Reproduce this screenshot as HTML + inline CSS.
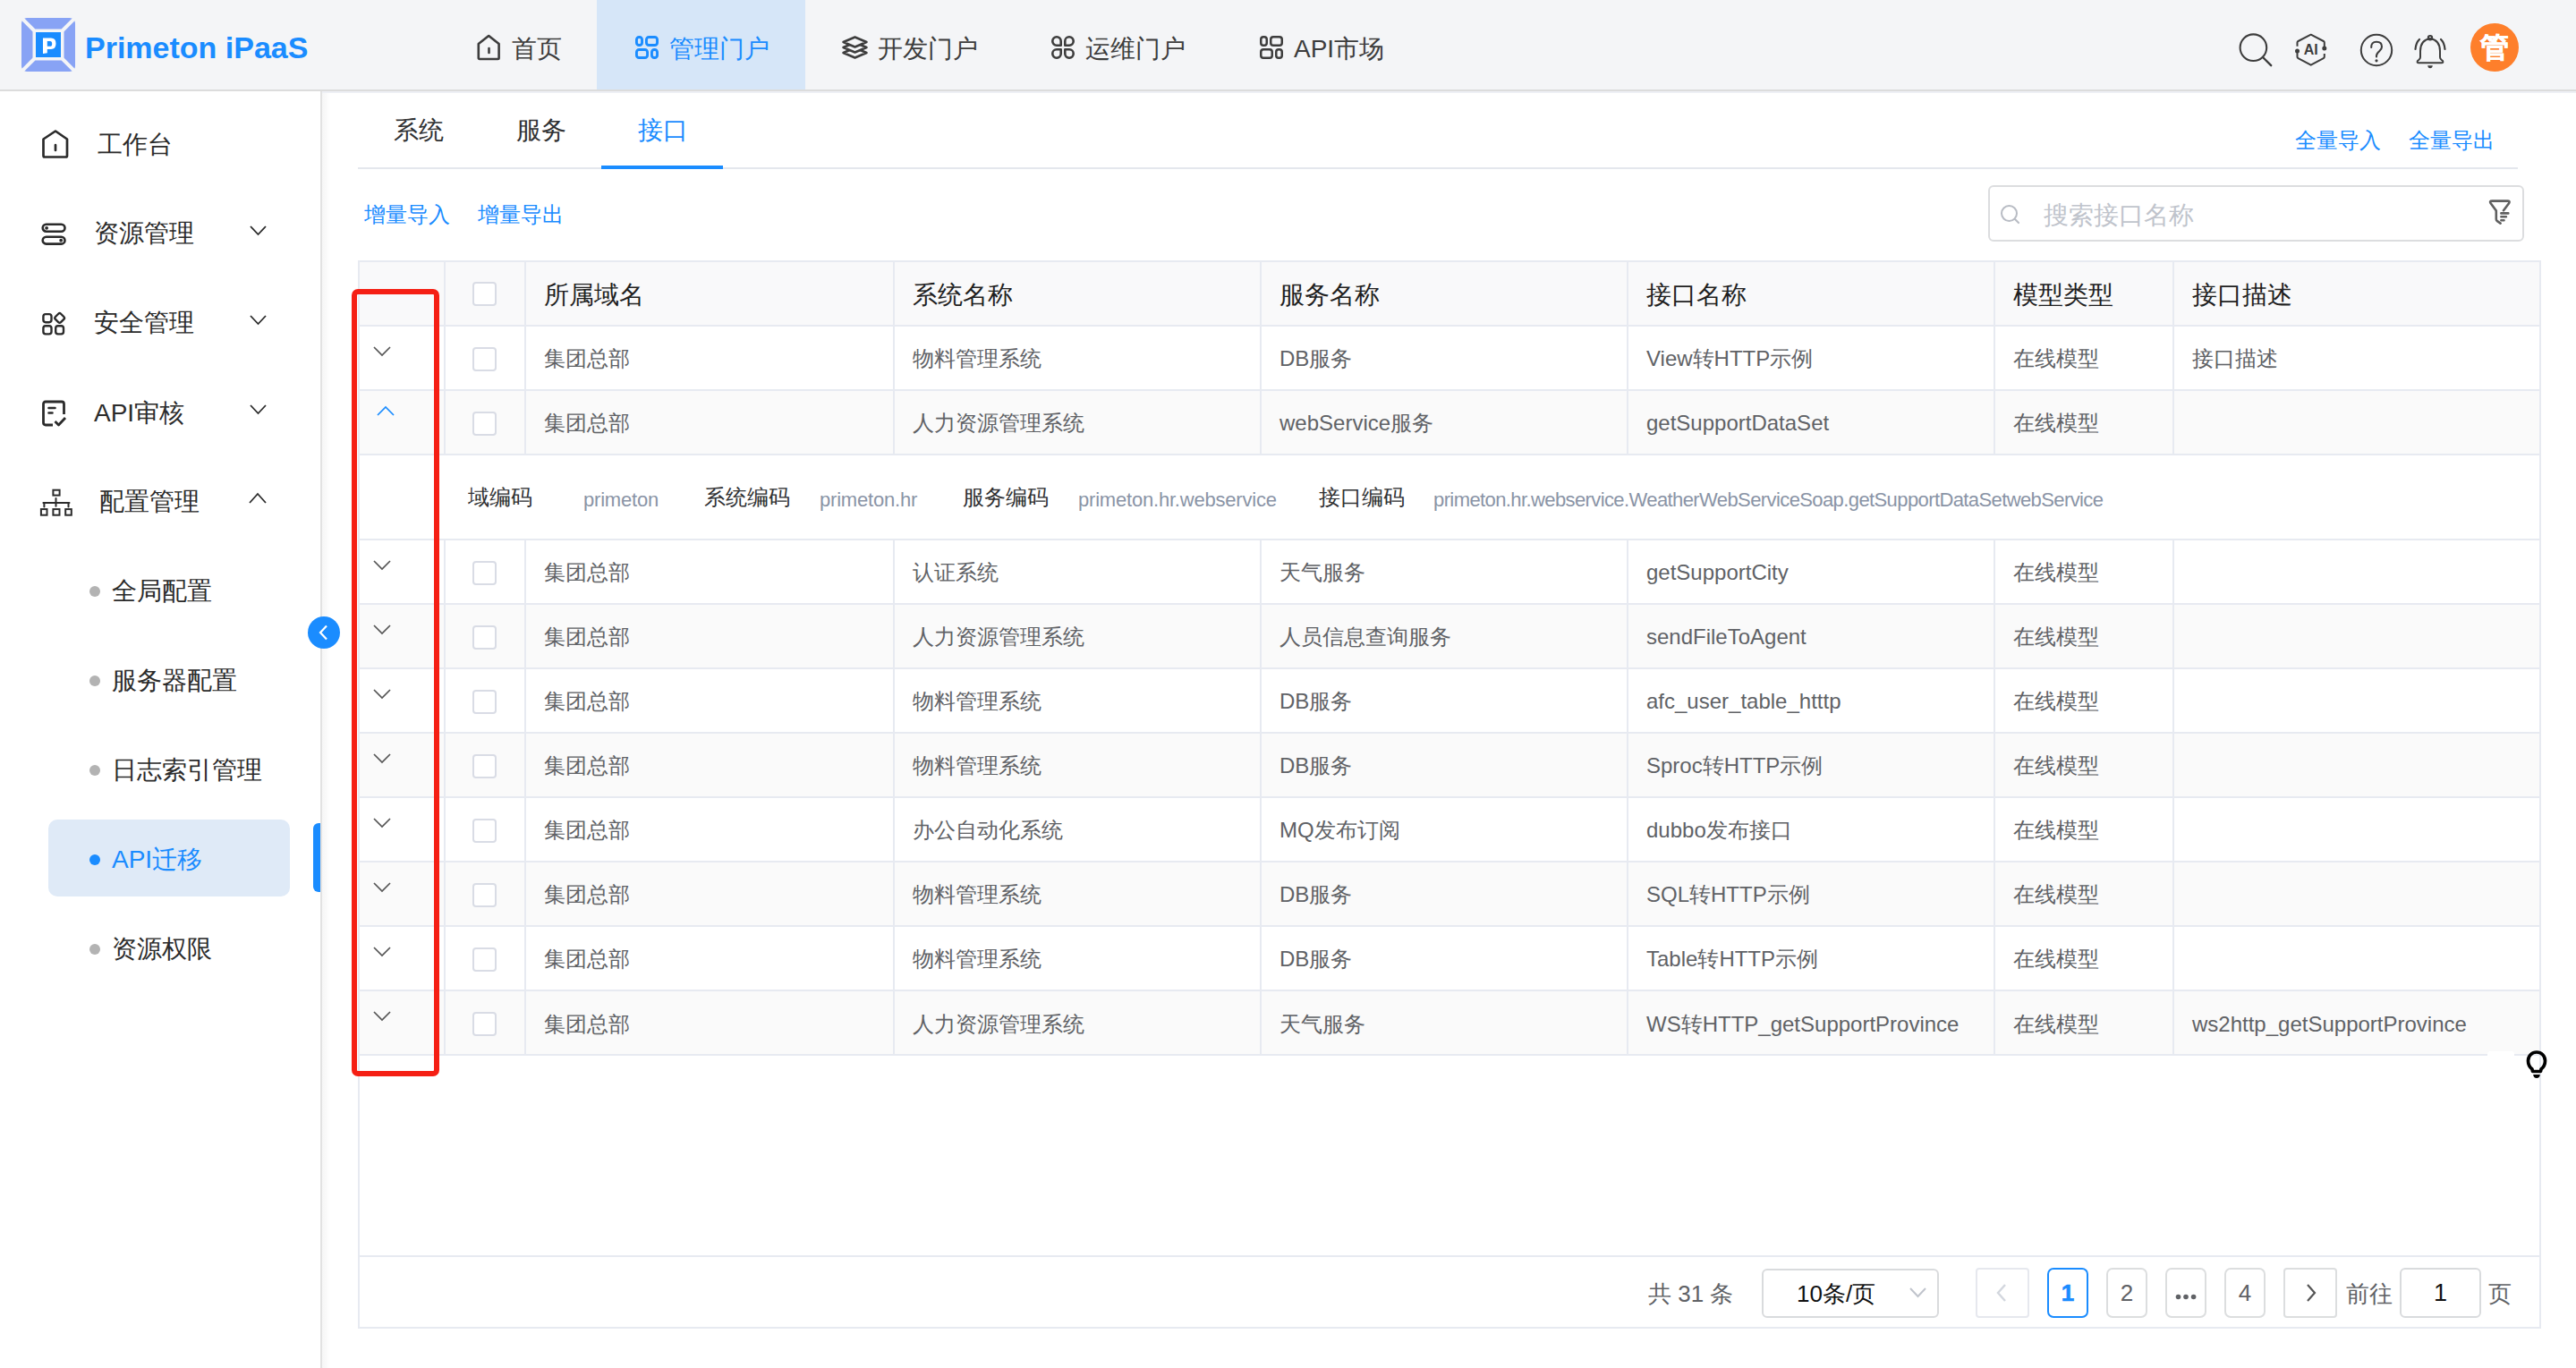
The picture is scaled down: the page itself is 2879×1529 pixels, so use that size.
<!DOCTYPE html><html><head><meta charset="utf-8"><style>
html,body{margin:0;padding:0;}
body{width:2879px;height:1529px;overflow:hidden;position:relative;background:#fff;font-family:"Liberation Sans", sans-serif;}
.t{position:absolute;white-space:nowrap;}
.b{position:absolute;}
</style></head><body>
<div class="b" style="left:0px;top:0px;width:2879px;height:100px;background:#f4f5f7"></div>
<div class="b" style="left:0px;top:100px;width:2879px;height:2px;background:#dcdcdc"></div>
<svg class="b" style="left:24px;top:20px" width="60" height="60" viewBox="0 0 60 60">
<rect x="0" y="0" width="60" height="60" rx="6" fill="#88a3f5"/>
<path d="M0 0L14 14M60 0L46 14M0 60L14 46M60 60L46 46" stroke="#f4f5f7" stroke-width="4"/>
<rect x="12.5" y="12.5" width="35" height="35" fill="#f4f5f7"/>
<rect x="16" y="16" width="28" height="28" fill="#1a8cff"/>
<path fill="#fff" fill-rule="evenodd" d="M24 22.5H33Q38.5 22.5 38.5 28.8Q38.5 35 33 35H28.8V39.3L24 40ZM28.8 26V31.8H32Q34.2 31.8 34.2 28.9Q34.2 26 32 26Z"/>
</svg>
<div class="t" style="left:95px;top:32.5px;font-size:34px;line-height:40px;color:#1a8cff;font-weight:bold;">Primeton iPaaS</div>
<div class="b" style="left:667px;top:0px;width:233px;height:100px;background:#d6e6f8"></div>
<svg class="b" style="left:533px;top:38px" width="27" height="30" viewBox="0 0 27 30"><path d="M1.8 11 L13.2 2 L24.6 11 V26.8 Q24.6 28 23.4 28 H3 Q1.8 28 1.8 26.8 Z" fill="none" stroke="#3d3d3d" stroke-width="2.6" stroke-linejoin="round"/>
<path d="M13.5 16V21" stroke="#3d3d3d" stroke-width="2.6" stroke-linecap="round"/></svg>
<div class="t" style="left:572px;top:34.5px;font-size:28px;line-height:40px;color:#3d3d3d;font-weight:normal;">首页</div>
<svg class="b" style="left:710px;top:40px" width="26" height="26" viewBox="0 0 26 26"><rect x="1.45" y="1.45" width="6.1" height="9.1" rx="2.8" fill="none" stroke="#1a8cff" stroke-width="2.9"/><rect x="12.45" y="1.45" width="12.1" height="9.1" rx="2.8" fill="none" stroke="#1a8cff" stroke-width="2.9"/><rect x="1.45" y="15.45" width="12.1" height="9.1" rx="2.8" fill="none" stroke="#1a8cff" stroke-width="2.9"/><rect x="18.45" y="15.45" width="6.1" height="9.1" rx="2.8" fill="none" stroke="#1a8cff" stroke-width="2.9"/></svg>
<div class="t" style="left:748px;top:34.5px;font-size:28px;line-height:40px;color:#1a8cff;font-weight:normal;">管理门户</div>
<svg class="b" style="left:940px;top:39px" width="31" height="29" viewBox="0 0 31 29"><g stroke="#3d3d3d" stroke-width="2.5" stroke-linejoin="round" fill="#f4f5f7">
<path d="M15.5 14.5 L28.5 20 L15.5 25.5 L2.5 20 Z"/>
<path d="M15.5 8.5 L28.5 14 L15.5 19.5 L2.5 14 Z"/>
<path d="M15.5 2.5 L28.5 8 L15.5 13.5 L2.5 8 Z"/></g></svg>
<div class="t" style="left:981px;top:34.5px;font-size:28px;line-height:40px;color:#3d3d3d;font-weight:normal;">开发门户</div>
<svg class="b" style="left:1174px;top:39px" width="28" height="28" viewBox="0 0 28 28"><path d="M6.8999999999999995 2.3 H7.1 A4.6 4.6 0 0 1 11.7 6.8999999999999995 V11.7 H6.8999999999999995 A4.6 4.6 0 0 1 2.3 7.1 V6.8999999999999995 A4.6 4.6 0 0 1 6.8999999999999995 2.3 Z" fill="none" stroke="#3d3d3d" stroke-width="2.6" stroke-linejoin="round"/><path d="M20.9 2.3 H21.1 A4.6 4.6 0 0 1 25.7 6.8999999999999995 V7.1 A4.6 4.6 0 0 1 21.1 11.7 H16.3 V6.8999999999999995 A4.6 4.6 0 0 1 20.9 2.3 Z" fill="none" stroke="#3d3d3d" stroke-width="2.6" stroke-linejoin="round"/><path d="M6.8999999999999995 16.3 H11.7 V21.1 A4.6 4.6 0 0 1 7.1 25.7 H6.8999999999999995 A4.6 4.6 0 0 1 2.3 21.1 V20.9 A4.6 4.6 0 0 1 6.8999999999999995 16.3 Z" fill="none" stroke="#3d3d3d" stroke-width="2.6" stroke-linejoin="round"/><path d="M16.3 16.3 H21.1 A4.6 4.6 0 0 1 25.7 20.9 V21.1 A4.6 4.6 0 0 1 21.1 25.7 H20.9 A4.6 4.6 0 0 1 16.3 21.1 V16.3 Z" fill="none" stroke="#3d3d3d" stroke-width="2.6" stroke-linejoin="round"/></svg>
<div class="t" style="left:1213px;top:34.5px;font-size:28px;line-height:40px;color:#3d3d3d;font-weight:normal;">运维门户</div>
<svg class="b" style="left:1408px;top:40px" width="26" height="26" viewBox="0 0 26 26"><rect x="1.25" y="1.25" width="6.5" height="9.5" rx="2.8" fill="none" stroke="#3d3d3d" stroke-width="2.5"/><rect x="12.25" y="1.25" width="12.5" height="9.5" rx="2.8" fill="none" stroke="#3d3d3d" stroke-width="2.5"/><rect x="1.25" y="15.25" width="12.5" height="9.5" rx="2.8" fill="none" stroke="#3d3d3d" stroke-width="2.5"/><rect x="18.25" y="15.25" width="6.5" height="9.5" rx="2.8" fill="none" stroke="#3d3d3d" stroke-width="2.5"/></svg>
<div class="t" style="left:1446px;top:34.5px;font-size:28px;line-height:40px;color:#3d3d3d;font-weight:normal;">API市场</div>
<svg class="b" style="left:2500px;top:35px" width="42" height="42" viewBox="0 0 42 42"><circle cx="18.4" cy="18.2" r="14.8" fill="none" stroke="#3d3d3d" stroke-width="2.1"/>
<path d="M29 29 L38.2 38.2" stroke="#3d3d3d" stroke-width="2.4" stroke-linecap="round"/></svg>
<svg class="b" style="left:2563px;top:36px" width="40" height="40" viewBox="0 0 40 40"><path d="M4.5 15.8 V11.5 Q4.5 10.5 5.5 10 L19.7 2.7 L33.8 10 Q34.8 10.5 34.8 11.5 V18.1" fill="none" stroke="#3d3d3d" stroke-width="2" stroke-linejoin="round"/>
<path d="M34.8 24 V27.6 Q34.8 28.6 33.8 29.1 L19.7 36.7 L5.5 29.1 Q4.5 28.6 4.5 27.6 V20.9" fill="none" stroke="#3d3d3d" stroke-width="2" stroke-linejoin="round"/>
<circle cx="4.5" cy="20.9" r="2.5" fill="#3d3d3d"/><circle cx="34.8" cy="18.1" r="2.5" fill="#3d3d3d"/>
<text x="19.7" y="25" text-anchor="middle" font-family="Liberation Sans" font-weight="bold" font-size="16" fill="#3d3d3d">AI</text></svg>
<svg class="b" style="left:2636px;top:36px" width="40" height="40" viewBox="0 0 40 40"><circle cx="20" cy="20" r="17.2" fill="none" stroke="#3d3d3d" stroke-width="2"/>
<path d="M14.2 17 Q14 10.8 20 10.8 Q26 10.8 26 16.2 Q26 18.8 23.2 21.2 Q20 24 20 26.2 V27.5" fill="none" stroke="#3d3d3d" stroke-width="2.1" stroke-linecap="round"/>
<circle cx="20" cy="31.8" r="1.6" fill="#3d3d3d"/></svg>
<svg class="b" style="left:2697px;top:37px" width="38" height="42" viewBox="0 0 38 42"><path d="M19 6 Q8 8 8 20 V27 Q8 28.5 6.5 29.8 L5 31 Q3.8 33.3 6.3 33.3 H31.7 Q34.2 33.3 33 31 L31.5 29.8 Q30 28.5 30 27 V20 Q30 8 19 6 Z" fill="none" stroke="#3d3d3d" stroke-width="2" stroke-linejoin="round"/>
<circle cx="19" cy="5.2" r="2.2" fill="none" stroke="#3d3d3d" stroke-width="2"/>
<path d="M16.2 36.3 H21.8 Q21.5 39.3 19 39.3 Q16.5 39.3 16.2 36.3Z" fill="#3d3d3d"/>
<path d="M7 7 Q3 11 2.5 18" fill="none" stroke="#3d3d3d" stroke-width="2.2" stroke-linecap="round"/>
<path d="M31 7 Q35 11 35.5 18" fill="none" stroke="#3d3d3d" stroke-width="2.2" stroke-linecap="round"/></svg>
<div class="b" style="left:2761px;top:26px;width:54px;height:54px;background:#fe7f2b;border-radius:50%"></div>
<div class="t" style="left:2772px;top:33.0px;font-size:32px;line-height:40px;color:#fff;font-weight:bold;-webkit-text-stroke:0.6px #fff">管</div>
<div class="b" style="left:358px;top:102px;width:2px;height:1427px;background:#e2e2e2"></div>
<div class="b" style="left:360px;top:102px;width:10px;height:1427px;background:linear-gradient(to right, rgba(0,0,0,0.035), rgba(0,0,0,0))"></div>
<svg class="b" style="left:46px;top:144px" width="32" height="34" viewBox="0 0 32 34"><path d="M2.5 11.5 L16 2.5 L29 11.5 V30 Q29 31.5 27.5 31.5 H4 Q2.5 31.5 2.5 30 Z" fill="none" stroke="#2b2b2b" stroke-width="2.7" stroke-linejoin="round"/>
<path d="M16 18V24" stroke="#2b2b2b" stroke-width="2.7" stroke-linecap="round"/></svg>
<div class="t" style="left:109px;top:141.5px;font-size:28px;line-height:40px;color:#2b2b2b;font-weight:normal;">工作台</div>
<svg class="b" style="left:45px;top:248px" width="31" height="28" viewBox="0 0 31 28"><rect x="2.7" y="2.8" width="24.8" height="7.9" rx="3.95" fill="none" stroke="#2b2b2b" stroke-width="2.6"/>
<rect x="2.7" y="16.7" width="24.8" height="7.9" rx="3.95" fill="none" stroke="#2b2b2b" stroke-width="2.6"/>
<circle cx="7.1" cy="6.8" r="1.9" fill="#2b2b2b"/><circle cx="23.2" cy="20.7" r="1.9" fill="#2b2b2b"/></svg>
<div class="t" style="left:105px;top:241.0px;font-size:28px;line-height:40px;color:#2b2b2b;font-weight:normal;">资源管理</div>
<svg class="b" style="left:277.5px;top:251px" width="21" height="13" viewBox="0 0 21 13"><path d="M2 2 L10.5 11 L19 2" fill="none" stroke="#2b2b2b" stroke-width="1.8"/></svg>
<svg class="b" style="left:45px;top:347px" width="30" height="30" viewBox="0 0 30 30"><g fill="none" stroke="#2b2b2b" stroke-width="2.4">
<rect x="3.4" y="4.1" width="9.1" height="9.1" rx="2.6"/>
<rect x="-4.3" y="-4.3" width="8.6" height="8.6" rx="2" transform="translate(21.65 8.4) rotate(45)"/>
<rect x="3.4" y="17.2" width="9.1" height="9.2" rx="2.6"/>
<rect x="17.2" y="17.2" width="8.8" height="9.2" rx="2.6"/></g></svg>
<div class="t" style="left:105px;top:341.0px;font-size:28px;line-height:40px;color:#2b2b2b;font-weight:normal;">安全管理</div>
<svg class="b" style="left:277.5px;top:351px" width="21" height="13" viewBox="0 0 21 13"><path d="M2 2 L10.5 11 L19 2" fill="none" stroke="#2b2b2b" stroke-width="1.8"/></svg>
<svg class="b" style="left:46px;top:447px" width="30" height="32" viewBox="0 0 30 32"><path d="M13 28 H5 Q2.5 28 2.5 25.5 V4.5 Q2.5 2 5 2 H23 Q25.5 2 25.5 4.5 V16" fill="none" stroke="#2b2b2b" stroke-width="2.8" stroke-linejoin="round"/>
<path d="M8.5 9H15.5M8.5 14.5H12.5" stroke="#2b2b2b" stroke-width="2.6" stroke-linecap="round"/>
<path d="M15.5 24 L19.5 28 L27 20" fill="none" stroke="#2b2b2b" stroke-width="2.8" stroke-linejoin="round"/></svg>
<div class="t" style="left:105px;top:442.0px;font-size:28px;line-height:40px;color:#2b2b2b;font-weight:normal;">API审核</div>
<svg class="b" style="left:277.5px;top:451px" width="21" height="13" viewBox="0 0 21 13"><path d="M2 2 L10.5 11 L19 2" fill="none" stroke="#2b2b2b" stroke-width="1.8"/></svg>
<svg class="b" style="left:44px;top:546px" width="38" height="32" viewBox="0 0 38 32"><g fill="none" stroke="#2b2b2b" stroke-width="2">
<rect x="15.4" y="1.7" width="7.2" height="5.9"/>
<path d="M18.5 11 V19.8 M4.4 15.9 H33.5 M5.4 15.9 V20.6 M32.5 15.9 V20.6" stroke-linecap="round"/>
<rect x="1.9" y="23.1" width="6.6" height="6.6"/><rect x="15.4" y="23.1" width="7.1" height="6.6"/><rect x="29.2" y="23.1" width="6.6" height="6.6"/></g></svg>
<div class="t" style="left:111px;top:541.0px;font-size:28px;line-height:40px;color:#2b2b2b;font-weight:normal;">配置管理</div>
<svg class="b" style="left:277px;top:549.5px" width="22" height="14" viewBox="0 0 22 14"><path d="M2 12 L11.0 2 L20 12" fill="none" stroke="#2b2b2b" stroke-width="1.8"/></svg>
<div class="b" style="left:100px;top:655px;width:12px;height:12px;background:#b3b3b3;border-radius:50%"></div>
<div class="t" style="left:125px;top:641.0px;font-size:28px;line-height:40px;color:#2b2b2b;font-weight:normal;">全局配置</div>
<div class="b" style="left:100px;top:755px;width:12px;height:12px;background:#b3b3b3;border-radius:50%"></div>
<div class="t" style="left:125px;top:741.0px;font-size:28px;line-height:40px;color:#2b2b2b;font-weight:normal;">服务器配置</div>
<div class="b" style="left:100px;top:855px;width:12px;height:12px;background:#b3b3b3;border-radius:50%"></div>
<div class="t" style="left:125px;top:841.0px;font-size:28px;line-height:40px;color:#2b2b2b;font-weight:normal;">日志索引管理</div>
<div class="b" style="left:100px;top:1055px;width:12px;height:12px;background:#b3b3b3;border-radius:50%"></div>
<div class="t" style="left:125px;top:1041.0px;font-size:28px;line-height:40px;color:#2b2b2b;font-weight:normal;">资源权限</div>
<div class="b" style="left:54px;top:916px;width:270px;height:86px;background:#dfeaf7;border-radius:10px"></div>
<div class="b" style="left:100px;top:955px;width:12px;height:12px;background:#1a8cff;border-radius:50%"></div>
<div class="t" style="left:125px;top:941.0px;font-size:28px;line-height:40px;color:#1a8cff;font-weight:normal;">API迁移</div>
<div class="b" style="left:350px;top:920px;width:8px;height:77px;background:#1a8cff;border-radius:6px 0 0 6px"></div>
<div class="b" style="left:344px;top:689px;width:36px;height:36px;background:#1a8cff;border-radius:50%"></div>
<svg class="b" style="left:344px;top:689px" width="36" height="36" viewBox="0 0 36 36"><path d="M21 10.5 L14 18 L21 25.5" fill="none" stroke="#fff" stroke-width="2.2"/></svg>
<div class="b" style="left:360px;top:102px;width:2519px;height:2px;background:#eef0f5"></div>
<div class="t" style="left:440px;top:125.5px;font-size:28px;line-height:40px;color:#303133;font-weight:normal;">系统</div>
<div class="t" style="left:577px;top:125.5px;font-size:28px;line-height:40px;color:#303133;font-weight:normal;">服务</div>
<div class="t" style="left:713px;top:125.5px;font-size:28px;line-height:40px;color:#1a8cff;font-weight:normal;">接口</div>
<div class="b" style="left:400px;top:187px;width:2414px;height:2px;background:#e4e7ed"></div>
<div class="b" style="left:672px;top:185px;width:136px;height:4px;background:#1a8cff"></div>
<div class="t" style="left:2565px;top:140.0px;font-size:24px;line-height:34px;color:#1a8cff;font-weight:normal;">全量导入</div>
<div class="t" style="left:2692px;top:140.0px;font-size:24px;line-height:34px;color:#1a8cff;font-weight:normal;">全量导出</div>
<div class="t" style="left:407px;top:223.0px;font-size:24px;line-height:34px;color:#1a8cff;font-weight:normal;">增量导入</div>
<div class="t" style="left:534px;top:223.0px;font-size:24px;line-height:34px;color:#1a8cff;font-weight:normal;">增量导出</div>
<div class="b" style="left:2222px;top:207px;width:599px;height:63px;box-sizing:border-box;border:2px solid #dcdddf;border-radius:6px;background:#fff"></div>
<svg class="b" style="left:2234px;top:227px" width="26" height="26" viewBox="0 0 26 26"><circle cx="11.5" cy="11.5" r="8.5" fill="none" stroke="#b8bcc4" stroke-width="2"/><path d="M18 18 L22 22" stroke="#b8bcc4" stroke-width="2.2" stroke-linecap="round"/></svg>
<div class="t" style="left:2284px;top:220.5px;font-size:28px;line-height:40px;color:#c0c4cc;font-weight:normal;">搜索接口名称</div>
<svg class="b" style="left:2770px;top:215px" width="45" height="45" viewBox="0 0 45 45"><path d="M28 20.2 L34 12.2 Q35.6 9.6 32.5 9.6 H15.2 Q12 9.6 13.7 12.2 L19.8 20.6 V30 Q19.8 31.3 21 32.2 L24.6 34.6" fill="none" stroke="#606060" stroke-width="2.6" stroke-linejoin="round" stroke-linecap="round"/><path d="M25.4 23.4 H33.3 M25.4 27.3 H30.9 M25.4 31.2 H28.5" stroke="#606060" stroke-width="2.6" stroke-linecap="round"/></svg>
<div class="b" style="left:401px;top:292px;width:2438px;height:72px;background:#f9f9fa"></div>
<div class="b" style="left:401px;top:436px;width:2438px;height:72px;background:#fafafa"></div>
<div class="b" style="left:401px;top:675px;width:2438px;height:72px;background:#fafafa"></div>
<div class="b" style="left:401px;top:819px;width:2438px;height:72px;background:#fafafa"></div>
<div class="b" style="left:401px;top:963px;width:2438px;height:72px;background:#fafafa"></div>
<div class="b" style="left:401px;top:1107px;width:2438px;height:73px;background:#fafafa"></div>
<div class="b" style="left:401px;top:291px;width:2438px;height:2px;background:#e7eaf1"></div>
<div class="b" style="left:401px;top:363px;width:2438px;height:2px;background:#e7eaf1"></div>
<div class="b" style="left:401px;top:435px;width:2438px;height:2px;background:#e7eaf1"></div>
<div class="b" style="left:401px;top:507px;width:2438px;height:2px;background:#e7eaf1"></div>
<div class="b" style="left:401px;top:602px;width:2438px;height:2px;background:#e7eaf1"></div>
<div class="b" style="left:401px;top:674px;width:2438px;height:2px;background:#e7eaf1"></div>
<div class="b" style="left:401px;top:746px;width:2438px;height:2px;background:#e7eaf1"></div>
<div class="b" style="left:401px;top:818px;width:2438px;height:2px;background:#e7eaf1"></div>
<div class="b" style="left:401px;top:890px;width:2438px;height:2px;background:#e7eaf1"></div>
<div class="b" style="left:401px;top:962px;width:2438px;height:2px;background:#e7eaf1"></div>
<div class="b" style="left:401px;top:1034px;width:2438px;height:2px;background:#e7eaf1"></div>
<div class="b" style="left:401px;top:1106px;width:2438px;height:2px;background:#e7eaf1"></div>
<div class="b" style="left:401px;top:1178px;width:2438px;height:2px;background:#e7eaf1"></div>
<div class="b" style="left:400px;top:291px;width:2px;height:1193px;background:#e7eaf1"></div>
<div class="b" style="left:2838px;top:291px;width:2px;height:1193px;background:#e7eaf1"></div>
<div class="b" style="left:400px;top:1403px;width:2440px;height:2px;background:#e7eaf1"></div>
<div class="b" style="left:400px;top:1483px;width:2440px;height:2px;background:#e7eaf1"></div>
<div class="b" style="left:496px;top:292px;width:2px;height:216px;background:#e7eaf1"></div>
<div class="b" style="left:496px;top:603px;width:2px;height:577px;background:#e7eaf1"></div>
<div class="b" style="left:586px;top:292px;width:2px;height:216px;background:#e7eaf1"></div>
<div class="b" style="left:586px;top:603px;width:2px;height:577px;background:#e7eaf1"></div>
<div class="b" style="left:998px;top:292px;width:2px;height:216px;background:#e7eaf1"></div>
<div class="b" style="left:998px;top:603px;width:2px;height:577px;background:#e7eaf1"></div>
<div class="b" style="left:1408px;top:292px;width:2px;height:216px;background:#e7eaf1"></div>
<div class="b" style="left:1408px;top:603px;width:2px;height:577px;background:#e7eaf1"></div>
<div class="b" style="left:1818px;top:292px;width:2px;height:216px;background:#e7eaf1"></div>
<div class="b" style="left:1818px;top:603px;width:2px;height:577px;background:#e7eaf1"></div>
<div class="b" style="left:2228px;top:292px;width:2px;height:216px;background:#e7eaf1"></div>
<div class="b" style="left:2228px;top:603px;width:2px;height:577px;background:#e7eaf1"></div>
<div class="b" style="left:2428px;top:292px;width:2px;height:216px;background:#e7eaf1"></div>
<div class="b" style="left:2428px;top:603px;width:2px;height:577px;background:#e7eaf1"></div>
<div class="t" style="left:608px;top:310.0px;font-size:28px;line-height:40px;color:#1f1f1f;font-weight:normal;">所属域名</div>
<div class="t" style="left:1020px;top:310.0px;font-size:28px;line-height:40px;color:#1f1f1f;font-weight:normal;">系统名称</div>
<div class="t" style="left:1430px;top:310.0px;font-size:28px;line-height:40px;color:#1f1f1f;font-weight:normal;">服务名称</div>
<div class="t" style="left:1840px;top:310.0px;font-size:28px;line-height:40px;color:#1f1f1f;font-weight:normal;">接口名称</div>
<div class="t" style="left:2250px;top:310.0px;font-size:28px;line-height:40px;color:#1f1f1f;font-weight:normal;">模型类型</div>
<div class="t" style="left:2450px;top:310.0px;font-size:28px;line-height:40px;color:#1f1f1f;font-weight:normal;">接口描述</div>
<div class="b" style="left:528px;top:315px;width:27px;height:27px;box-sizing:border-box;border:2px solid #d9dce5;border-radius:4px;background:#fff"></div>
<div class="b" style="left:528px;top:387.5px;width:27px;height:27px;box-sizing:border-box;border:2px solid #d9dce5;border-radius:4px;background:#fff"></div>
<div class="t" style="left:608px;top:384.0px;font-size:24px;line-height:34px;color:#606266;font-weight:normal;">集团总部</div>
<div class="t" style="left:1020px;top:384.0px;font-size:24px;line-height:34px;color:#606266;font-weight:normal;">物料管理系统</div>
<div class="t" style="left:1430px;top:384.0px;font-size:24px;line-height:34px;color:#606266;font-weight:normal;">DB服务</div>
<div class="t" style="left:1840px;top:384.0px;font-size:24px;line-height:34px;color:#606266;font-weight:normal;">View转HTTP示例</div>
<div class="t" style="left:2250px;top:384.0px;font-size:24px;line-height:34px;color:#606266;font-weight:normal;">在线模型</div>
<div class="t" style="left:2450px;top:384.0px;font-size:24px;line-height:34px;color:#606266;font-weight:normal;">接口描述</div>
<svg class="b" style="left:416px;top:386px" width="22" height="13" viewBox="0 0 22 13"><path d="M2 2 L11.0 11 L20 2" fill="none" stroke="#555" stroke-width="1.7"/></svg>
<div class="b" style="left:528px;top:459.5px;width:27px;height:27px;box-sizing:border-box;border:2px solid #d9dce5;border-radius:4px;background:#fff"></div>
<div class="t" style="left:608px;top:456.0px;font-size:24px;line-height:34px;color:#606266;font-weight:normal;">集团总部</div>
<div class="t" style="left:1020px;top:456.0px;font-size:24px;line-height:34px;color:#606266;font-weight:normal;">人力资源管理系统</div>
<div class="t" style="left:1430px;top:456.0px;font-size:24px;line-height:34px;color:#606266;font-weight:normal;">webService服务</div>
<div class="t" style="left:1840px;top:456.0px;font-size:24px;line-height:34px;color:#606266;font-weight:normal;">getSupportDataSet</div>
<div class="t" style="left:2250px;top:456.0px;font-size:24px;line-height:34px;color:#606266;font-weight:normal;">在线模型</div>
<svg class="b" style="left:420px;top:453px" width="22" height="13" viewBox="0 0 22 13"><path d="M2 11 L11.0 2 L20 11" fill="none" stroke="#1a8cff" stroke-width="1.7"/></svg>
<div class="b" style="left:528px;top:626.5px;width:27px;height:27px;box-sizing:border-box;border:2px solid #d9dce5;border-radius:4px;background:#fff"></div>
<div class="t" style="left:608px;top:623.0px;font-size:24px;line-height:34px;color:#606266;font-weight:normal;">集团总部</div>
<div class="t" style="left:1020px;top:623.0px;font-size:24px;line-height:34px;color:#606266;font-weight:normal;">认证系统</div>
<div class="t" style="left:1430px;top:623.0px;font-size:24px;line-height:34px;color:#606266;font-weight:normal;">天气服务</div>
<div class="t" style="left:1840px;top:623.0px;font-size:24px;line-height:34px;color:#606266;font-weight:normal;">getSupportCity</div>
<div class="t" style="left:2250px;top:623.0px;font-size:24px;line-height:34px;color:#606266;font-weight:normal;">在线模型</div>
<svg class="b" style="left:416px;top:625px" width="22" height="13" viewBox="0 0 22 13"><path d="M2 2 L11.0 11 L20 2" fill="none" stroke="#555" stroke-width="1.7"/></svg>
<div class="b" style="left:528px;top:698.5px;width:27px;height:27px;box-sizing:border-box;border:2px solid #d9dce5;border-radius:4px;background:#fff"></div>
<div class="t" style="left:608px;top:695.0px;font-size:24px;line-height:34px;color:#606266;font-weight:normal;">集团总部</div>
<div class="t" style="left:1020px;top:695.0px;font-size:24px;line-height:34px;color:#606266;font-weight:normal;">人力资源管理系统</div>
<div class="t" style="left:1430px;top:695.0px;font-size:24px;line-height:34px;color:#606266;font-weight:normal;">人员信息查询服务</div>
<div class="t" style="left:1840px;top:695.0px;font-size:24px;line-height:34px;color:#606266;font-weight:normal;">sendFileToAgent</div>
<div class="t" style="left:2250px;top:695.0px;font-size:24px;line-height:34px;color:#606266;font-weight:normal;">在线模型</div>
<svg class="b" style="left:416px;top:697px" width="22" height="13" viewBox="0 0 22 13"><path d="M2 2 L11.0 11 L20 2" fill="none" stroke="#555" stroke-width="1.7"/></svg>
<div class="b" style="left:528px;top:770.5px;width:27px;height:27px;box-sizing:border-box;border:2px solid #d9dce5;border-radius:4px;background:#fff"></div>
<div class="t" style="left:608px;top:767.0px;font-size:24px;line-height:34px;color:#606266;font-weight:normal;">集团总部</div>
<div class="t" style="left:1020px;top:767.0px;font-size:24px;line-height:34px;color:#606266;font-weight:normal;">物料管理系统</div>
<div class="t" style="left:1430px;top:767.0px;font-size:24px;line-height:34px;color:#606266;font-weight:normal;">DB服务</div>
<div class="t" style="left:1840px;top:767.0px;font-size:24px;line-height:34px;color:#606266;font-weight:normal;">afc_user_table_htttp</div>
<div class="t" style="left:2250px;top:767.0px;font-size:24px;line-height:34px;color:#606266;font-weight:normal;">在线模型</div>
<svg class="b" style="left:416px;top:769px" width="22" height="13" viewBox="0 0 22 13"><path d="M2 2 L11.0 11 L20 2" fill="none" stroke="#555" stroke-width="1.7"/></svg>
<div class="b" style="left:528px;top:842.5px;width:27px;height:27px;box-sizing:border-box;border:2px solid #d9dce5;border-radius:4px;background:#fff"></div>
<div class="t" style="left:608px;top:839.0px;font-size:24px;line-height:34px;color:#606266;font-weight:normal;">集团总部</div>
<div class="t" style="left:1020px;top:839.0px;font-size:24px;line-height:34px;color:#606266;font-weight:normal;">物料管理系统</div>
<div class="t" style="left:1430px;top:839.0px;font-size:24px;line-height:34px;color:#606266;font-weight:normal;">DB服务</div>
<div class="t" style="left:1840px;top:839.0px;font-size:24px;line-height:34px;color:#606266;font-weight:normal;">Sproc转HTTP示例</div>
<div class="t" style="left:2250px;top:839.0px;font-size:24px;line-height:34px;color:#606266;font-weight:normal;">在线模型</div>
<svg class="b" style="left:416px;top:841px" width="22" height="13" viewBox="0 0 22 13"><path d="M2 2 L11.0 11 L20 2" fill="none" stroke="#555" stroke-width="1.7"/></svg>
<div class="b" style="left:528px;top:914.5px;width:27px;height:27px;box-sizing:border-box;border:2px solid #d9dce5;border-radius:4px;background:#fff"></div>
<div class="t" style="left:608px;top:911.0px;font-size:24px;line-height:34px;color:#606266;font-weight:normal;">集团总部</div>
<div class="t" style="left:1020px;top:911.0px;font-size:24px;line-height:34px;color:#606266;font-weight:normal;">办公自动化系统</div>
<div class="t" style="left:1430px;top:911.0px;font-size:24px;line-height:34px;color:#606266;font-weight:normal;">MQ发布订阅</div>
<div class="t" style="left:1840px;top:911.0px;font-size:24px;line-height:34px;color:#606266;font-weight:normal;">dubbo发布接口</div>
<div class="t" style="left:2250px;top:911.0px;font-size:24px;line-height:34px;color:#606266;font-weight:normal;">在线模型</div>
<svg class="b" style="left:416px;top:913px" width="22" height="13" viewBox="0 0 22 13"><path d="M2 2 L11.0 11 L20 2" fill="none" stroke="#555" stroke-width="1.7"/></svg>
<div class="b" style="left:528px;top:986.5px;width:27px;height:27px;box-sizing:border-box;border:2px solid #d9dce5;border-radius:4px;background:#fff"></div>
<div class="t" style="left:608px;top:983.0px;font-size:24px;line-height:34px;color:#606266;font-weight:normal;">集团总部</div>
<div class="t" style="left:1020px;top:983.0px;font-size:24px;line-height:34px;color:#606266;font-weight:normal;">物料管理系统</div>
<div class="t" style="left:1430px;top:983.0px;font-size:24px;line-height:34px;color:#606266;font-weight:normal;">DB服务</div>
<div class="t" style="left:1840px;top:983.0px;font-size:24px;line-height:34px;color:#606266;font-weight:normal;">SQL转HTTP示例</div>
<div class="t" style="left:2250px;top:983.0px;font-size:24px;line-height:34px;color:#606266;font-weight:normal;">在线模型</div>
<svg class="b" style="left:416px;top:985px" width="22" height="13" viewBox="0 0 22 13"><path d="M2 2 L11.0 11 L20 2" fill="none" stroke="#555" stroke-width="1.7"/></svg>
<div class="b" style="left:528px;top:1058.5px;width:27px;height:27px;box-sizing:border-box;border:2px solid #d9dce5;border-radius:4px;background:#fff"></div>
<div class="t" style="left:608px;top:1055.0px;font-size:24px;line-height:34px;color:#606266;font-weight:normal;">集团总部</div>
<div class="t" style="left:1020px;top:1055.0px;font-size:24px;line-height:34px;color:#606266;font-weight:normal;">物料管理系统</div>
<div class="t" style="left:1430px;top:1055.0px;font-size:24px;line-height:34px;color:#606266;font-weight:normal;">DB服务</div>
<div class="t" style="left:1840px;top:1055.0px;font-size:24px;line-height:34px;color:#606266;font-weight:normal;">Table转HTTP示例</div>
<div class="t" style="left:2250px;top:1055.0px;font-size:24px;line-height:34px;color:#606266;font-weight:normal;">在线模型</div>
<svg class="b" style="left:416px;top:1057px" width="22" height="13" viewBox="0 0 22 13"><path d="M2 2 L11.0 11 L20 2" fill="none" stroke="#555" stroke-width="1.7"/></svg>
<div class="b" style="left:528px;top:1131.0px;width:27px;height:27px;box-sizing:border-box;border:2px solid #d9dce5;border-radius:4px;background:#fff"></div>
<div class="t" style="left:608px;top:1127.5px;font-size:24px;line-height:34px;color:#606266;font-weight:normal;">集团总部</div>
<div class="t" style="left:1020px;top:1127.5px;font-size:24px;line-height:34px;color:#606266;font-weight:normal;">人力资源管理系统</div>
<div class="t" style="left:1430px;top:1127.5px;font-size:24px;line-height:34px;color:#606266;font-weight:normal;">天气服务</div>
<div class="t" style="left:1840px;top:1127.5px;font-size:24px;line-height:34px;color:#606266;font-weight:normal;">WS转HTTP_getSupportProvince</div>
<div class="t" style="left:2250px;top:1127.5px;font-size:24px;line-height:34px;color:#606266;font-weight:normal;">在线模型</div>
<div class="t" style="left:2450px;top:1127.5px;font-size:24px;line-height:34px;color:#606266;font-weight:normal;">ws2http_getSupportProvince</div>
<svg class="b" style="left:416px;top:1129px" width="22" height="13" viewBox="0 0 22 13"><path d="M2 2 L11.0 11 L20 2" fill="none" stroke="#555" stroke-width="1.7"/></svg>
<div class="t" style="left:523px;top:539.0px;font-size:24px;line-height:34px;color:#303133;font-weight:normal;">域编码</div>
<div class="t" style="left:652px;top:543.0px;font-size:22px;line-height:32px;color:#8a94a6;font-weight:normal;letter-spacing:-0.2px">primeton</div>
<div class="t" style="left:787px;top:539.0px;font-size:24px;line-height:34px;color:#303133;font-weight:normal;">系统编码</div>
<div class="t" style="left:916px;top:543.0px;font-size:22px;line-height:32px;color:#8a94a6;font-weight:normal;letter-spacing:-0.2px">primeton.hr</div>
<div class="t" style="left:1076px;top:539.0px;font-size:24px;line-height:34px;color:#303133;font-weight:normal;">服务编码</div>
<div class="t" style="left:1205px;top:543.0px;font-size:22px;line-height:32px;color:#8a94a6;font-weight:normal;letter-spacing:-0.2px">primeton.hr.webservice</div>
<div class="t" style="left:1474px;top:539.0px;font-size:24px;line-height:34px;color:#303133;font-weight:normal;">接口编码</div>
<div class="t" style="left:1602px;top:543.0px;font-size:22px;line-height:32px;color:#8a94a6;font-weight:normal;letter-spacing:-0.6px">primeton.hr.webservice.WeatherWebServiceSoap.getSupportDataSetwebService</div>
<div class="b" style="left:2780px;top:1175px;width:30px;height:8px;background:#fff;border-radius:3px"></div>
<svg class="b" style="left:2820px;top:1172px" width="30" height="36" viewBox="0 0 30 36"><path d="M10 23 Q5.5 19.5 5.5 13.5 A9.5 9.5 0 0 1 24.5 13.5 Q24.5 19.5 20 23 L19.5 25.5 H10.5 Z" fill="none" stroke="#000" stroke-width="3.7" stroke-linejoin="round"/><path d="M11.2 29 H18.8 Q18.5 33 15 33 Q11.5 33 11.2 29 Z" fill="#000"/></svg>
<div class="t" style="left:1842px;top:1428.0px;font-size:26px;line-height:36px;color:#606266;font-weight:normal;">共 31 条</div>
<div class="b" style="left:1969px;top:1418px;width:198px;height:55px;box-sizing:border-box;border:2px solid #d9dbdd;border-radius:6px"></div>
<div class="t" style="left:2008px;top:1428.0px;font-size:26px;line-height:36px;color:#111;font-weight:normal;">10条/页</div>
<svg class="b" style="left:2133px;top:1438px" width="21" height="13" viewBox="0 0 21 13"><path d="M2 2 L10.5 11 L19 2" fill="none" stroke="#c0c4cc" stroke-width="2"/></svg>
<div class="b" style="left:2208px;top:1417px;width:60px;height:56px;box-sizing:border-box;border:2px solid #e6e8ee;border-radius:4px;background:#fff"></div>
<svg class="b" style="left:2228px;top:1433px" width="20" height="24" viewBox="0 0 20 24"><path d="M13 3 L5 12 L13 21" fill="none" stroke="#d3d7de" stroke-width="2.4"/></svg>
<div class="b" style="left:2288px;top:1417px;width:46px;height:56px;box-sizing:border-box;border:2px solid #1a8cff;border-radius:7px;background:#fff"></div>
<div class="t" style="left:2288px;top:1427px;width:46px;text-align:center;font-size:26px;line-height:36px;color:#1a8cff;font-weight:bold;-webkit-text-stroke:0.6px #1a8cff">1</div>
<div class="b" style="left:2354px;top:1417px;width:46px;height:56px;box-sizing:border-box;border:2px solid #dcdedf;border-radius:7px;background:#fff"></div>
<div class="t" style="left:2354px;top:1427px;width:46px;text-align:center;font-size:26px;line-height:36px;color:#606266">2</div>
<div class="b" style="left:2420px;top:1417px;width:46px;height:56px;box-sizing:border-box;border:2px solid #dcdedf;border-radius:7px;background:#fff"></div>
<svg class="b" style="left:2420px;top:1417px" width="46" height="55" viewBox="0 0 46 55"><circle cx="14.5" cy="32.5" r="2.8" fill="#606266"/><circle cx="23" cy="32.5" r="2.8" fill="#606266"/><circle cx="31.6" cy="32.5" r="2.8" fill="#606266"/></svg>
<div class="b" style="left:2486px;top:1417px;width:46px;height:56px;box-sizing:border-box;border:2px solid #dcdedf;border-radius:7px;background:#fff"></div>
<div class="t" style="left:2486px;top:1427px;width:46px;text-align:center;font-size:26px;line-height:36px;color:#606266">4</div>
<div class="b" style="left:2552px;top:1417px;width:60px;height:56px;box-sizing:border-box;border:2px solid #dcdedf;border-radius:4px;background:#fff"></div>
<svg class="b" style="left:2572px;top:1433px" width="20" height="24" viewBox="0 0 20 24"><path d="M7 3 L15 12 L7 21" fill="none" stroke="#555" stroke-width="2.2"/></svg>
<div class="t" style="left:2622px;top:1428.0px;font-size:26px;line-height:36px;color:#606266;font-weight:normal;">前往</div>
<div class="b" style="left:2682px;top:1417px;width:91px;height:56px;box-sizing:border-box;border:2px solid #d9dbdd;border-radius:6px"></div>
<div class="t" style="left:2682px;top:1427px;width:91px;text-align:center;font-size:27px;line-height:36px;color:#111">1</div>
<div class="t" style="left:2781px;top:1428.0px;font-size:26px;line-height:36px;color:#606266;font-weight:normal;">页</div>
<div class="b" style="left:393px;top:323px;width:98px;height:880px;box-sizing:border-box;border:6px solid #f51f14;border-radius:7px"></div>
</body></html>
